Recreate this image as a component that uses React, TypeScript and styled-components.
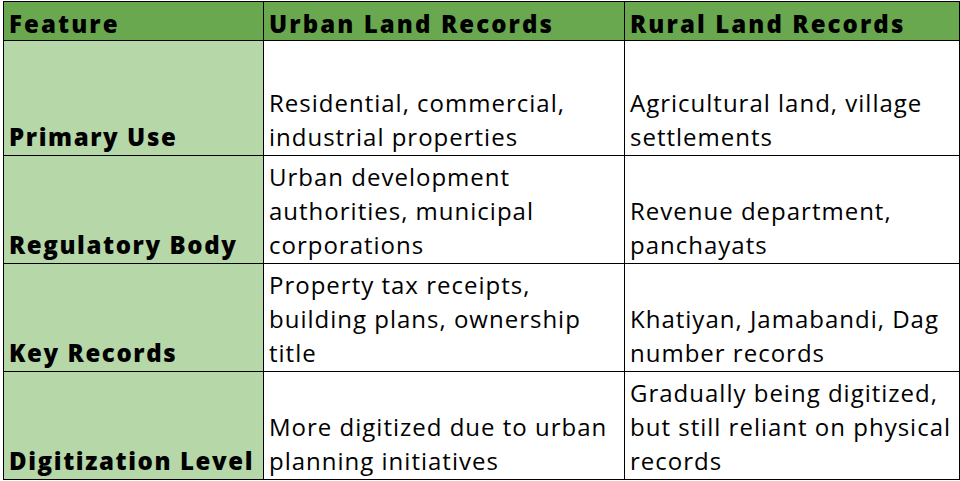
import React from 'react'
import styled, { createGlobalStyle } from 'styled-components'

const GlobalStyle = createGlobalStyle`
    body {
        margin: 0;
        background: #fff;
        font-family: "Open Sans", "Liberation Sans", sans-serif;
    }
`

type Row = { feature: string; urban: string[]; rural: string[]; height: number }

// lines are kept as they wrap in the sheet
const rows: Row[] = [
    {
        feature: 'Primary Use',
        urban: ['Residential, commercial,', 'industrial properties'],
        rural: ['Agricultural land, village', 'settlements'],
        height: 115,
    },
    {
        feature: 'Regulatory Body',
        urban: ['Urban development', 'authorities, municipal', 'corporations'],
        rural: ['Revenue department,', 'panchayats'],
        height: 108,
    },
    {
        feature: 'Key Records',
        urban: ['Property tax receipts,', 'building plans, ownership', 'title'],
        rural: ['Khatiyan, Jamabandi, Dag', 'number records'],
        height: 108,
    },
    {
        feature: 'Digitization Level',
        urban: ['More digitized due to urban', 'planning initiatives'],
        rural: ['Gradually being digitized,', 'but still reliant on physical', 'records'],
        height: 108,
    },
]

function Lines({ lines }: { lines: string[] }) {
    return (
        <>
            {lines.map((line) => (
                <StLine key={line}>{line}</StLine>
            ))}
        </>
    )
}

function App() {
    return (
        <>
            <GlobalStyle />
            <StSheet>
                <colgroup>
                    <col style={{ width: 260 }} />
                    <col style={{ width: 361 }} />
                    <col style={{ width: 335 }} />
                </colgroup>
                <thead>
                    <StHeadRow>
                        <StHeadCell>Feature</StHeadCell>
                        <StHeadCell>Urban Land Records</StHeadCell>
                        <StHeadCell>Rural Land Records</StHeadCell>
                    </StHeadRow>
                </thead>
                <tbody>
                    {rows.map((row) => (
                        <StRow key={row.feature} $height={row.height}>
                            <StLabelCell>{row.feature}</StLabelCell>
                            <StCell><Lines lines={row.urban} /></StCell>
                            <StCell><Lines lines={row.rural} /></StCell>
                        </StRow>
                    ))}
                </tbody>
            </StSheet>
        </>
    )
}

export default App

const StSheet = styled.table`
    margin: 1px 0 0 3px;
    width: 957px;
    border-collapse: collapse;
    table-layout: fixed;
    color: #000;
`

const StHeadRow = styled.tr`
    height: 39px;
`

const StRow = styled.tr<{ $height: number }>`
    height: ${(p) => p.$height}px;
`

const StCellBase = styled.td`
    border: 1px solid #000;
    padding: 0 2px 1px 5px;
    vertical-align: bottom;
    text-align: left;
    font-size: 24px;
    line-height: 34px;
    white-space: nowrap;
    overflow: hidden;
`

const StHeadCell = styled(StCellBase).attrs({ as: 'th' })`
    background: #6aa84f;
    font-weight: 800;
    letter-spacing: 2.1px;
    padding-bottom: 0;
    line-height: 32px;
`

const StLabelCell = styled(StCellBase)`
    background: #b6d7a8;
    font-weight: 800;
    letter-spacing: 1.6px;
`

const StCell = styled(StCellBase)`
    background: #fff;
    font-weight: 400;
    letter-spacing: 1px;
`

const StLine = styled.div`
    display: block;
`
